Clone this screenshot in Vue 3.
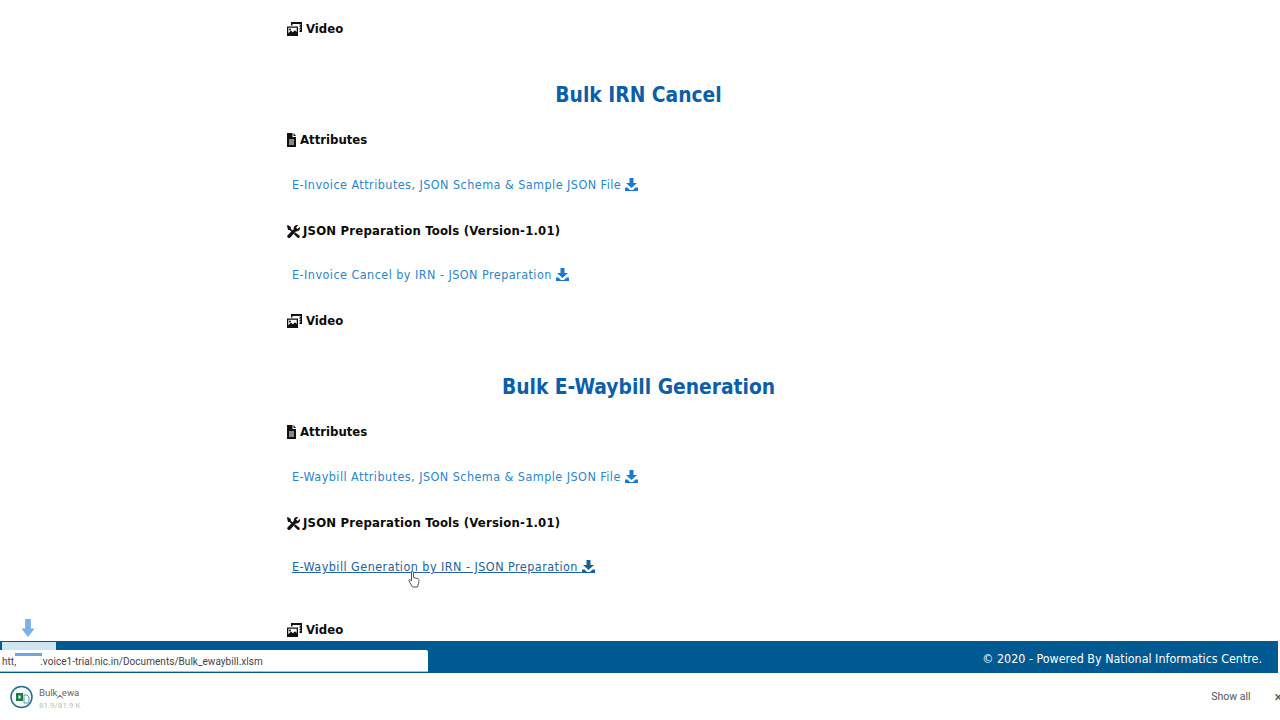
<script setup>
const sections = [
  {
    title: 'Bulk IRN Cancel',
    attr: 'E-Invoice Attributes, JSON Schema & Sample JSON File',
    tool: 'E-Invoice Cancel by IRN - JSON Preparation',
    hover: false
  },
  {
    title: 'Bulk E-Waybill Generation',
    attr: 'E-Waybill Attributes, JSON Schema & Sample JSON File',
    tool: 'E-Waybill Generation by IRN - JSON Preparation',
    hover: true
  }
];
</script>

<template>
  <div class="page">
    <main class="content">
      <div class="column">
        <h4 class="label first">
          <svg class="ico film" viewBox="0 0 15 14"><path d="M4 0h11v10h-2.500V8.500H13v-1h-.5V6H13V5h-.5V3.500H13v-1h-.5V2H5.500v1.500H4zM14 2h-.5v1h.5zm0 2.500h-.5v1h.5zm0 2.500h-.5v1h.5zM0 4.500h11V14H0zm1.300 1.300v5.400l2.700-2.700 1.800 1.800 2.200-2 1.700 1.700V5.800zM3 6.500a1 1 0 1 1 0 2 1 1 0 0 1 0-2z" fill-rule="evenodd"/></svg>
          Video
        </h4>
        <section v-for="s in sections" :key="s.title" class="block">
          <h2 class="title">{{ s.title }}</h2>
          <h4 class="label">
            <svg class="ico file" viewBox="0 0 9 14"><path d="M0 0h5.500v4H9v10H0zM6.500 0 9 3H6.500zM2 6.500v1h5v-1zm0 2v1h5v-1zm0 2v1h5v-1z" fill-rule="evenodd"/></svg>
            Attributes
          </h4>
          <p class="row attr-row">
            <a class="link">{{ s.attr }}
              <svg class="dl" viewBox="0 0 13 13"><path d="M4.500 0h4v5H12L6.500 10 1 5h3.500zM0 9.500h2.500L5 12h3l2.500-2.500H13V13H0z"/></svg>
            </a>
          </p>
          <h4 class="label tools-label">
            <svg class="ico tools" viewBox="0 0 13 13"><path d="M.8 0l3 2v1.700l3.300 3.200-1.300 1.300-3.200-3.300H1L0 .8zM10 0c.4 0 .8 0 1.200.2L9 2.400l1.700 1.700 2.100-2.200A3.300 3.300 0 0 1 9 6.300L3.300 12.400a1.700 1.700 0 0 1-2.600-2.200L6.800 4A3.300 3.300 0 0 1 10 0zM8.300 7.500l4.300 3.300a1.500 1.500 0 0 1-2 2L6.800 9z"/></svg>
            JSON Preparation Tools (Version-1.01)
          </h4>
          <p class="row">
            <a class="link" :class="{ hovered: s.hover }">{{ s.tool }}
              <svg class="dl" viewBox="0 0 13 13"><path d="M4.500 0h4v5H12L6.500 10 1 5h3.500zM0 9.500h2.500L5 12h3l2.500-2.500H13V13H0z"/></svg>
            </a>
          </p>
          <h4 class="label" :class="{ late: s.hover }">
            <svg class="ico film" viewBox="0 0 15 14"><path d="M4 0h11v10h-2.500V8.500H13v-1h-.5V6H13V5h-.5V3.500H13v-1h-.5V2H5.500v1.500H4zM14 2h-.5v1h.5zm0 2.500h-.5v1h.5zm0 2.500h-.5v1h.5zM0 4.500h11V14H0zm1.300 1.300v5.400l2.700-2.700 1.800 1.800 2.200-2 1.700 1.700V5.800zM3 6.500a1 1 0 1 1 0 2 1 1 0 0 1 0-2z" fill-rule="evenodd"/></svg>
            Video
          </h4>
        </section>
      </div>
      <svg class="cursor" viewBox="0 0 12 18"><path d="M3.500 1.500c1-.8 2 0 2 1v5l4 1c1 .3 1.500 1 1.500 2l-.5 3-1 3.500H4.500L1 11c-.6-1 .6-2 1.500-1l1 1z" fill="#fff" stroke="#555" stroke-width="1"/></svg>
      <svg class="drop" viewBox="0 0 14 20"><path d="M4 0h6v10h4l-7 9-7-9h4z"/></svg>
    </main>

    <footer class="footer">© 2020 - Powered By National Informatics Centre.</footer>

    <div class="shelf">
      <div class="item">
        <svg class="xl" viewBox="0 0 24 24">
          <circle cx="11.500" cy="12" r="10.500" fill="#f4fafb" stroke="#1d6f8c" stroke-width="1.500"/>
          <rect x="6" y="8" width="7" height="8" fill="#1c7a45"/>
          <rect x="8.500" y="10.500" width="2" height="3" fill="#fff"/>
          <path d="M14 10h3l2 2v6h-5z" fill="none" stroke="#5e97ad" stroke-width="1"/>
        </svg>
        <div class="meta">
          <div class="name">Bulk_ewa</div>
          <div class="size">81.9/81.9 K</div>
        </div>
      </div>
      <div class="shelf-right">
        <span class="show">Show all</span>
        <span class="close">×</span>
      </div>
    </div>

    <div class="status">
      <span>htt,</span><span class="gap"></span><span>.voice1-trial.nic.in/Documents/Bulk_ewaybill.xlsm</span>
      <i class="status-bar"></i>
    </div>
    <i class="status-tab"></i>
    <svg class="caret" viewBox="0 0 8 5"><path d="M1 4.500 4 1l3 3.500" fill="none" stroke="#777" stroke-width="1"/></svg>
  </div>
</template>

<style scoped>
.page {
  position: relative;
  width: 1280px;
  height: 720px;
  display: flex;
  flex-direction: column;
  overflow: hidden;
  background: #fff;
  font-family: "DejaVu Sans Condensed", "DejaVu Sans", sans-serif;
}

.content {
  position: relative;
  height: 641px;
  overflow: hidden;
}

.column {
  width: 703px;
  margin-left: 287px;
}

.label {
  display: flex;
  align-items: center;
  gap: 4px;
  height: 20px;
  box-sizing: border-box;
  padding-top: 2px;
  margin: 0;
  font-size: 13px;
  font-weight: 700;
  line-height: 20px;
  color: #0b0b0b;
}

.tools-label {
  gap: 3px;
  letter-spacing: 0.2px;
}

.first {
  margin-top: 18px;
}

.ico {
  flex: none;
  fill: #111;
}

.film {
  width: 15px;
  height: 14px;
}

.file {
  width: 9px;
  height: 14px;
}

.tools {
  width: 13px;
  height: 13px;
}

.block {
  padding-top: 42px;
}

.title {
  margin: 0 0 19px;
  height: 30px;
  font-size: 20.800px;
  font-weight: 700;
  line-height: 30px;
  text-align: center;
  color: #0b5ea8;
}

.row {
  margin: 25px 0 25px;
  padding-left: 5px;
  height: 20px;
  font-size: 12.500px;
  line-height: 20px;
}

.attr-row {
  margin-top: 26px;
}

.link {
  color: #2a85c9;
  letter-spacing: 0.45px;
}

.hovered {
  color: #23629b;
  text-decoration: underline;
}

.dl {
  width: 13px;
  height: 13px;
  vertical-align: -2px;
  fill: #1c78d0;
}

.hovered .dl {
  fill: #1b5e9c;
}

.late {
  margin-top: 42px;
}

.cursor {
  position: absolute;
  left: 408px;
  top: 570px;
  width: 12px;
  height: 18px;
}

.drop {
  position: absolute;
  left: 21px;
  top: 619px;
  width: 14px;
  height: 19px;
  fill: #7db0e8;
}

.footer {
  width: 1278px;
  height: 32px;
  padding-right: 16px;
  box-sizing: border-box;
  background: #005a92;
  color: #fff;
  font-size: 12.400px;
  line-height: 36px;
  text-align: right;
}

.shelf {
  flex: 1;
  display: flex;
  align-items: center;
  justify-content: space-between;
  background: #fff;
}

.item {
  display: flex;
  align-items: center;
  gap: 5px;
  padding-left: 10px;
}

.xl {
  width: 24px;
  height: 24px;
}

.meta {
  font-family: "Roboto", sans-serif;
  padding-top: 3px;
}

.name {
  font-size: 9.600px;
  color: #666;
}

.size {
  font-size: 8px;
  color: #bbb;
  margin-top: 3px;
}

.shelf-right {
  display: flex;
  align-items: center;
  gap: 24px;
  margin-right: -2px;
  font-family: "Roboto", sans-serif;
  font-size: 10.500px;
  color: #555;
}

.close {
  font-size: 14px;
}

.status {
  position: absolute;
  left: 0;
  top: 650px;
  width: 428px;
  height: 22px;
  display: flex;
  align-items: center;
  padding: 1px 0 0 2px;
  box-sizing: border-box;
  background: #fff;
  border-bottom: 1px solid #bbb;
  border-radius: 0 2px 0 0;
  font-family: "Roboto", sans-serif;
  font-size: 10px;
  letter-spacing: 0.04px;
  color: #444;
}

.gap {
  width: 24px;
}

.status-bar {
  position: absolute;
  left: 15px;
  top: 3px;
  width: 27px;
  height: 3px;
  background: #6ea8e2;
}

.status-tab {
  position: absolute;
  left: 2px;
  top: 642px;
  width: 54px;
  height: 8px;
  background: #cfe6f2;
}

.caret {
  position: absolute;
  left: 56px;
  top: 694px;
  width: 8px;
  height: 5px;
}
</style>
